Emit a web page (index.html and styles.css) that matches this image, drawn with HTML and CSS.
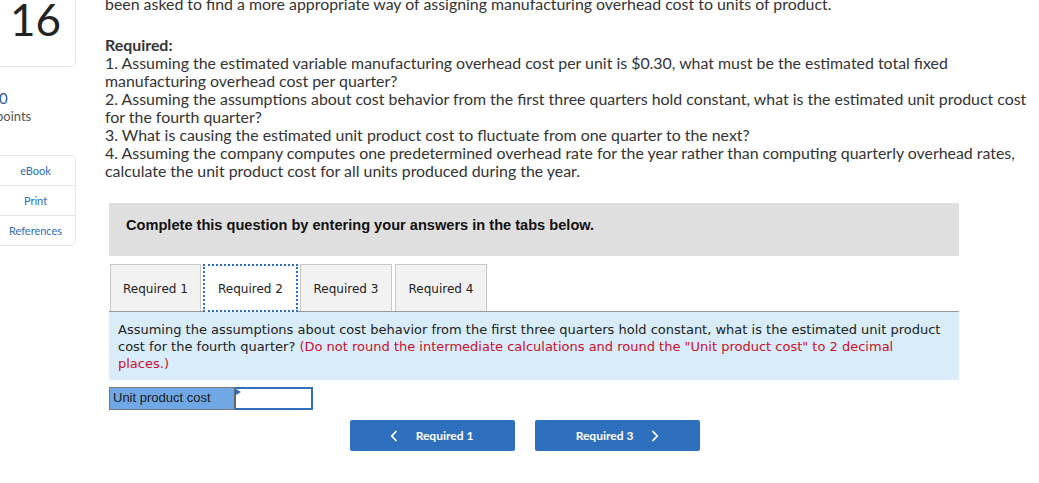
FILE: index.html
```html
<!DOCTYPE html>
<html>
<head>
<meta charset="utf-8">
<link rel="stylesheet" href="styles.css">
</head>
<body>
<div class="page">
  <aside class="sidebar">
    <div class="qnum">16</div>
    <div class="score">
      <div class="score-val">0</div>
      <div class="score-label">points</div>
    </div>
    <div class="links">
      <a class="link">eBook</a>
      <a class="link">Print</a>
      <a class="link">References</a>
    </div>
  </aside>
  <main class="main">
    <p class="intro">been asked to find a more appropriate way of assigning manufacturing overhead cost to units of product.</p>
    <div class="required">
      <div class="req-title">Required:</div>
      <div>1. Assuming the estimated variable manufacturing overhead cost per unit is $0.30, what must be the estimated total fixed manufacturing overhead cost per quarter?</div>
      <div>2. Assuming the assumptions about cost behavior from the first three quarters hold constant, what is the estimated unit product cost for the fourth quarter?</div>
      <div>3. What is causing the estimated unit product cost to fluctuate from one quarter to the next?</div>
      <div>4. Assuming the company computes one predetermined overhead rate for the year rather than computing quarterly overhead rates, calculate the unit product cost for all units produced during the year.</div>
    </div>
    <div class="complete">Complete this question by entering your answers in the tabs below.</div>
    <div class="tabs">
      <div class="tab t1">Required 1</div>
      <div class="tab t2 active">Required 2</div>
      <div class="tab t3">Required 3</div>
      <div class="tab t4">Required 4</div>
    </div>
    <div class="info">Assuming the assumptions about cost behavior from the first three quarters hold constant, what is the estimated unit product cost for the fourth quarter? <span class="warn">(Do not round the intermediate calculations and round the "Unit product cost" to 2 decimal places.)</span></div>
    <div class="answer">
      <div class="ans-label">Unit product cost</div>
      <div class="ans-input"><span class="flag"></span></div>
    </div>
    <div class="nav">
      <button class="btn btn-prev"><svg width="8" height="12" viewBox="0 0 8 12"><path d="M6.5 1 L1.8 6 L6.5 11" fill="none" stroke="#fff" stroke-width="1.8"/></svg><span>Required 1</span></button>
      <button class="btn btn-next"><span>Required 3</span><svg width="8" height="12" viewBox="0 0 8 12"><path d="M1.5 1 L6.2 6 L1.5 11" fill="none" stroke="#fff" stroke-width="1.8"/></svg></button>
    </div>
  </main>
</div>
</body>
</html>
```
FILE: styles.css
```css
html, body {
  margin: 0;
  padding: 0;
  background: #fff;
  overflow: hidden;
}
.page {
  display: flex;
  align-items: flex-start;
}
.sidebar {
  width: 81px;
  margin-left: -5px;
  flex-shrink: 0;
  font-family: Lato, "Open Sans", sans-serif;
}
.qnum {
  margin-top: -20px;
  padding: 16px 0 25px;
  border: 1px solid #e6e6e6;
  border-radius: 5px;
  text-align: center;
  font-size: 44px;
  line-height: 44px;
  color: #222;
}
.score {
  margin-top: 22px;
  padding-left: 4px;
}
.score-val {
  font-size: 15px;
  line-height: 18px;
  color: #1f5f9e;
}
.score-label {
  font-size: 13px;
  line-height: 18px;
  color: #555;
  margin-left: -3px;
}
.links {
  margin-top: 30px;
  border: 1px solid #e6e6e6;
  border-radius: 5px;
  display: flex;
  flex-direction: column;
}
.link {
  display: block;
  height: 29px;
  line-height: 29px;
  text-align: center;
  font-size: 11px;
  color: #2a6ebb;
}
.link + .link {
  border-top: 1px solid #e6e6e6;
}
.main {
  margin-left: 29px;
  margin-top: -2px;
  width: 935px;
  font-family: Lato, "Open Sans", sans-serif;
  font-size: 15.9px;
  line-height: 18px;
  color: #333;
}
.intro {
  margin: -3px 0 23px;
}
.req-title {
  font-weight: bold;
}
.complete {
  margin: 23px 0 0 4px;
  width: 850px;
  box-sizing: border-box;
  height: 53px;
  padding: 13px 17px;
  background: #dfdfdf;
  font-family: "Liberation Sans", Arial, sans-serif;
  font-weight: bold;
  font-size: 14.6px;
  line-height: 18px;
  color: #111;
}
.tabs {
  margin: 8px 0 0 4px;
  width: 850px;
  display: flex;
  gap: 2px;
  padding-left: 1px;
  box-sizing: border-box;
  border-bottom: 1px solid #999;
}
.tab {
  height: 47px;
  box-sizing: border-box;
  border: 1px solid #c8c8c8;
  border-bottom: none;
  background: #f2f2f2;
  display: flex;
  align-items: center;
  justify-content: center;
  padding-top: 2px;
  font-family: "DejaVu Sans", Verdana, sans-serif;
  font-size: 12px;
  color: #222;
}
.t1 { width: 91px; }
.t2 { width: 95px; }
.t3 { width: 92px; }
.t4 { width: 92px; margin-left: 1px; }
.tab.active {
  background: #fff;
  border: 2px dotted #2c6fbf;
  margin-bottom: -1px;
  height: 48px;
}
.info {
  margin-left: 4px;
  width: 850px;
  box-sizing: border-box;
  padding: 9px 14px 8px 9px;
  background: #d8ecf9;
  font-family: "DejaVu Sans", Verdana, sans-serif;
  font-size: 13px;
  line-height: 17px;
  color: #222;
}
.warn {
  color: #c8102e;
}
.answer {
  margin: 7px 0 0 4px;
  display: flex;
  height: 23px;
}
.ans-label {
  width: 127px;
  box-sizing: border-box;
  background: #6fa8e4;
  border: 1px solid #777;
  border-right: 2px solid #666;
  padding-left: 3px;
  font-family: "Liberation Sans", Arial, sans-serif;
  font-size: 13px;
  line-height: 20px;
  color: #1a1a1a;
}
.ans-input {
  position: relative;
  width: 77px;
  box-sizing: border-box;
  background: #fff;
  border: 2px solid #2f6fbd;
  border-left: none;
}
.flag {
  position: absolute;
  left: 0;
  top: 0;
  width: 0;
  height: 0;
  border-top: 3px solid transparent;
  border-bottom: 3px solid transparent;
  border-left: 5px solid #2f6fbd;
}
.nav {
  margin: 10px 0 0 245px;
  display: flex;
  gap: 20px;
}
.btn {
  width: 165px;
  height: 31px;
  border: none;
  border-radius: 2px;
  background: #2f70be;
  color: #fff;
  font-family: Lato, "Open Sans", sans-serif;
  font-weight: bold;
  font-size: 12px;
  display: flex;
  align-items: center;
  justify-content: center;
  gap: 18px;
  padding: 0;
}
.btn-prev { padding-right: 2px; }
```
